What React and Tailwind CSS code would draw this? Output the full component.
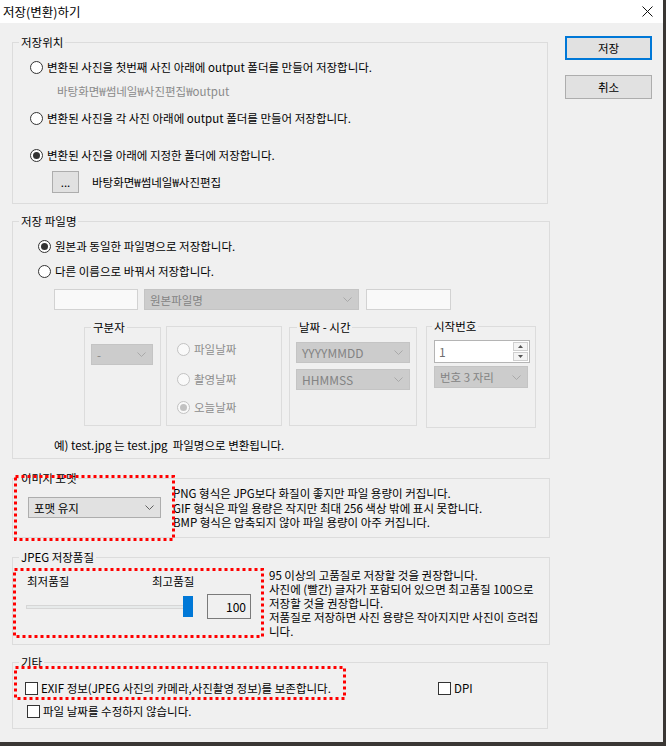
import React from "react";

const Chevron = ({ color = "#7a7a7a" }) => (
  <svg width="9" height="5" viewBox="0 0 9 5" className="shrink-0">
    <path d="M0.5 0.5 L4.5 4.5 L8.5 0.5" stroke={color} strokeWidth="1" fill="none" />
  </svg>
);

const Radio = ({ checked, disabled, children, className = "" }) => (
  <div className={`flex items-center h-[14px] ${className}`}>
    <span
      className={`w-[13px] h-[13px] rounded-full border flex items-center justify-center shrink-0 ${
        disabled ? "border-[#c2c2c2] bg-[#f9f9f9]" : "border-[#333333] bg-white"
      }`}
    >
      {checked && (
        <span className={`w-[7px] h-[7px] rounded-full ${disabled ? "bg-[#c2c2c2]" : "bg-[#333333]"}`} />
      )}
    </span>
    <span className={`ml-[4px] whitespace-nowrap ${disabled ? "text-[#8d8d8d]" : ""}`}>{children}</span>
  </div>
);

const Check = ({ children, className = "" }) => (
  <div className={`flex items-center h-[14px] ${className}`}>
    <span className="w-[13px] h-[13px] border border-[#333333] bg-white shrink-0" />
    <span className="ml-[3px] whitespace-nowrap">{children}</span>
  </div>
);

const Combo = ({ text, disabled, className = "" }) => (
  <div
    className={`flex items-center justify-between border pl-[5px] pr-[6px] ${
      disabled ? "bg-[#cccccc] border-[#c4c4c4] text-[#838383]" : "bg-[#e1e1e1] border-[#adadad]"
    } ${className}`}
  >
    <span className="whitespace-nowrap">{text}</span>
    <Chevron color={disabled ? "#a9a9a9" : "#606060"} />
  </div>
);

// red dotted marks drawn over the dialog
const RedMark = ({ w, h, className }) => (
  <div className={`absolute pointer-events-none ${className}`}>
    <svg width={w} height={h}>
      <rect
        x="1.5"
        y="1.5"
        width={w - 3}
        height={h - 3}
        fill="none"
        stroke="#ff0000"
        strokeWidth="3"
        strokeDasharray="3 3"
      />
    </svg>
  </div>
);

export default function App() {
  return (
    <div className="w-[666px] h-[746px] bg-[#3a3734] overflow-hidden font-['Noto_Sans_CJK_KR',sans-serif] text-[11.5px] leading-[14px] text-black">
      <div className="relative w-[663px] h-[742px] bg-[#f0f0f0] flex flex-col">
        {/* title bar */}
        <div className="h-[23px] bg-white flex items-center justify-between shrink-0">
          <div className="ml-[3px] text-[12.5px]">저장(변환)하기</div>
          <svg width="11" height="11" viewBox="0 0 11 11" className="mr-[10px]">
            <path d="M0.5 0.5 L10.5 10.5 M10.5 0.5 L0.5 10.5" stroke="#111111" strokeWidth="1" />
          </svg>
        </div>

        <div className="flex flex-row">
          {/* left column */}
          <div className="w-[538px] ml-[12px] pt-[12px] flex flex-col">
            {/* 저장위치 */}
            <fieldset className="w-[536px] h-[169px] border border-[#dcdcdc]">
              <legend className="ml-[6px] px-[2px] leading-[14px]">저장위치</legend>
              <div className="flex flex-col pl-[17px]">
                <Radio className="mt-[11px]">변환된 사진을 첫번째 사진 아래에 output 폴더를 만들어 저장합니다.</Radio>
                <div className="mt-[10px] pl-[27px] h-[14px] text-[#8a8a8a]">바탕화면₩썸네일₩사진편집₩output</div>
                <Radio className="mt-[13px]">변환된 사진을 각 사진 아래에 output 폴더를 만들어 저장합니다.</Radio>
                <Radio className="mt-[23px]" checked>
                  변환된 사진을 아래에 지정한 폴더에 저장합니다.
                </Radio>
                <div className="mt-[9px] flex items-center">
                  <div className="ml-[22px] w-[27px] h-[22px] border border-[#adadad] bg-[#e1e1e1] flex items-center justify-center">
                    ...
                  </div>
                  <div className="ml-[13px]">바탕화면₩썸네일₩사진편집</div>
                </div>
              </div>
            </fieldset>

            {/* 저장 파일명 */}
            <fieldset className="mt-[10px] w-[538px] h-[245px] border border-[#dcdcdc]">
              <legend className="ml-[6px] px-[2px] leading-[14px]">저장 파일명</legend>
              <div className="flex flex-col pl-[25px]">
                <Radio className="mt-[11px]" checked>
                  원본과 동일한 파일명으로 저장합니다.
                </Radio>
                <Radio className="mt-[11px]">다른 이름으로 바꿔서 저장합니다.</Radio>
                <div className="mt-[11px] ml-[16px] flex items-center">
                  <div className="w-[84px] h-[21px] border border-[#d2d2d2] bg-[#f9f9f9]" />
                  <Combo className="ml-[6px] w-[215px] h-[21px]" text="원본파일명" disabled />
                  <div className="ml-[7px] w-[85px] h-[21px] border border-[#d2d2d2] bg-[#f9f9f9]" />
                </div>

                <div className="mt-[10px] ml-[46px] flex items-start">
                  <fieldset className="w-[77px] h-[106px] border border-[#dcdcdc]">
                    <legend className="ml-[6px] px-[2px] leading-[14px]">구분자</legend>
                    <Combo className="mt-[10px] ml-[6px] w-[62px] h-[21px]" text="-" disabled />
                  </fieldset>
                  <fieldset className="ml-[5px] mt-[6px] w-[116px] h-[100px] border border-[#dcdcdc]">
                    <div className="flex flex-col pl-[10px]">
                      <Radio className="mt-[15px]" disabled>
                        파일날짜
                      </Radio>
                      <Radio className="mt-[16px]" disabled>
                        촬영날짜
                      </Radio>
                      <Radio className="mt-[14px]" disabled checked>
                        오늘날짜
                      </Radio>
                    </div>
                  </fieldset>
                  <fieldset className="ml-[7px] w-[128px] h-[106px] border border-[#dcdcdc]">
                    <legend className="ml-[7px] px-[2px] leading-[14px]">날짜 - 시간</legend>
                    <div className="flex flex-col pl-[6px] text-[12px]">
                      <Combo className="mt-[8px] w-[114px] h-[21px]" text="YYYYMMDD" disabled />
                      <Combo className="mt-[6px] w-[114px] h-[21px]" text="HHMMSS" disabled />
                    </div>
                  </fieldset>
                  <fieldset className="ml-[9px] mt-[-1px] w-[110px] h-[109px] border border-[#dcdcdc]">
                    <legend className="ml-[5px] px-[2px] leading-[14px]">시작번호</legend>
                    <div className="flex flex-col pl-[7px]">
                      <div className="mt-[7px] w-[96px] h-[23px] border border-[#b4b4b4] bg-white flex items-center justify-between text-[12px] text-[#6d6d6d]">
                        <span className="ml-[4px]">1</span>
                        <div className="flex flex-col gap-[1px] mr-[1px]">
                          <div className="w-[15px] h-[9px] border border-[#cfcfcf] bg-[#f4f4f4] flex items-center justify-center">
                            <svg width="5" height="3" viewBox="0 0 5 3">
                              <path d="M0 3 L2.5 0 L5 3 Z" fill="#555555" />
                            </svg>
                          </div>
                          <div className="w-[15px] h-[9px] border border-[#cfcfcf] bg-[#f4f4f4] flex items-center justify-center">
                            <svg width="5" height="3" viewBox="0 0 5 3">
                              <path d="M0 0 L2.5 3 L5 0 Z" fill="#555555" />
                            </svg>
                          </div>
                        </div>
                      </div>
                      <Combo className="mt-[3px] w-[94px] h-[22px]" text="번호 3 자리" disabled />
                    </div>
                  </fieldset>
                </div>

                <div className="mt-[10px] ml-[16px] h-[14px] whitespace-nowrap">
                  예) test.jpg 는 test.jpg &nbsp;파일명으로 변환됩니다.
                </div>
              </div>
            </fieldset>

            {/* 이미지 포맷 */}
            <fieldset className="mt-[12px] w-[538px] h-[67px] border border-[#dcdcdc]">
              <legend className="ml-[6px] px-[2px] leading-[14px]">이미지 포맷</legend>
              <div className="flex items-start">
                <Combo className="mt-[12px] ml-[15px] w-[133px] h-[21px]" text="포맷 유지" />
                <div className="ml-[12px] mt-[1px] leading-[14.5px] whitespace-nowrap">
                  <div>PNG 형식은 JPG보다 화질이 좋지만 파일 용량이 커집니다.</div>
                  <div>GIF 형식은 파일 용량은 작지만 최대 256 색상 밖에 표시 못합니다.</div>
                  <div>BMP 형식은 압축되지 않아 파일 용량이 아주 커집니다.</div>
                </div>
              </div>
            </fieldset>

            {/* JPEG 저장품질 */}
            <fieldset className="mt-[12px] w-[538px] h-[95px] border border-[#dcdcdc]">
              <legend className="ml-[6px] px-[2px] leading-[14px]">JPEG 저장품질</legend>
              <div className="flex items-start">
                <div className="flex flex-col">
                  <div className="mt-[10px] ml-[14px] flex h-[14px]">
                    <span className="w-[125px]">최저품질</span>
                    <span>최고품질</span>
                  </div>
                  <div className="mt-[6px] flex items-center h-[25px]">
                    <div className="relative ml-[13px] w-[167px] h-[21px] flex items-center">
                      <div className="w-full h-[4px] border border-[#d6d6d6] bg-[#e7eaea]" />
                      <div className="absolute right-0 top-0 w-[10px] h-[21px] bg-[#0078d7]" />
                    </div>
                    <div className="ml-[14px] w-[44px] h-[25px] border border-[#7a7a7a] flex items-center justify-end pr-[4px] text-[12px]">
                      100
                    </div>
                  </div>
                </div>
                <div className="ml-[18px] mt-[4px] leading-[14px] whitespace-nowrap">
                  <div>95 이상의 고품질로 저장할 것을 권장합니다.</div>
                  <div>사진에 (빨간) 글자가 포함되어 있으면 최고품질 100으로</div>
                  <div>저장할 것을 권장합니다.</div>
                  <div>저품질로 저장하면 사진 용량은 작아지지만 사진이 흐려집</div>
                  <div>니다.</div>
                </div>
              </div>
            </fieldset>

            {/* 기타 */}
            <fieldset className="mt-[10px] w-[536px] h-[74px] border border-[#dcdcdc]">
              <legend className="ml-[6px] px-[2px] leading-[14px]">기타</legend>
              <div className="flex flex-col">
                <div className="mt-[12px] ml-[12px] flex">
                  <Check className="w-[413px]">EXIF 정보(JPEG 사진의 카메라,사진촬영 정보)를 보존합니다.</Check>
                  <Check>DPI</Check>
                </div>
                <Check className="mt-[9px] ml-[14px]">파일 날짜를 수정하지 않습니다.</Check>
              </div>
            </fieldset>
          </div>

          {/* right buttons */}
          <div className="ml-[15px] pt-[13px] flex flex-col">
            <div className="w-[87px] h-[24px] border-2 border-[#0078d7] bg-[#e1e1e1] flex items-center justify-center">
              저장
            </div>
            <div className="mt-[15px] w-[87px] h-[24px] border border-[#adadad] bg-[#e1e1e1] flex items-center justify-center">
              취소
            </div>
          </div>
        </div>

        <RedMark w={161} h={66} className="left-[14px] top-[475px]" />
        <RedMark w={251} h={70} className="left-[13px] top-[568px]" />
        <RedMark w={332} h={34} className="left-[14px] top-[666px]" />
      </div>
    </div>
  );
}
